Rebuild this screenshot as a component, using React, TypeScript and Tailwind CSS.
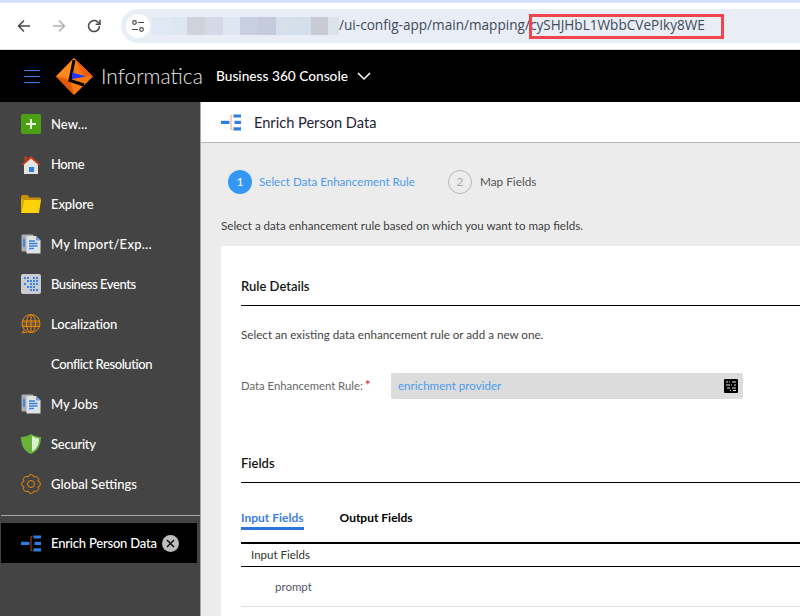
const pix: [number, string][] = [
  [18, "#dfe8f3"], [17, "#dde7f2"], [18, "#cfd2db"], [18, "#d3d9e6"], [17, "#dde6f1"], [18, "#c7cfe0"], [18, "#c5cbdd"], [17, "#d6e0ea"], [18, "#d3dfeb"], [17, "#c8cbd6"], [11, "#dde3ea"],
];

function EnrichIcon({ bracket = "#b5431a" }: { bracket?: string }) {
  return (
    <svg width="20" height="17" viewBox="0 0 20 17" className="shrink-0">
      <path d="M11.500 1.500H10v14h1.500" fill="none" stroke={bracket} strokeWidth="1" />
      <rect x="0" y="6.800" width="8.500" height="3.200" fill="#2f7de1" />
      <rect x="12.500" y="0.500" width="7.500" height="3" fill="#2f7de1" />
      <rect x="13.500" y="6.800" width="6.500" height="3.200" fill="#2f7de1" />
      <rect x="12.500" y="13.300" width="7.500" height="3.200" fill="#2f7de1" />
    </svg>
  );
}

function DocsIcon() {
  return (
    <svg width="20" height="20" viewBox="0 0 20 20">
      <rect x="0.500" y="0.500" width="12" height="17" rx="1" fill="#a9adb3" />
      <rect x="2" y="5" width="2" height="8" fill="#4d86d8" />
      <path d="M5.500 2h9.500l4.500 4.500v13H5.500z" fill="#dfe1e4" />
      <path d="M15 2l4.500 4.500H15z" fill="#6fa0e6" />
      <path d="M8 7h6M8 9.500h8.500M8 12h8.500M8 14.500h5" stroke="#3d7fdd" strokeWidth="1.500" />
    </svg>
  );
}

const icons: Record<string, React.ReactNode> = {
  new: (
    <svg width="20" height="20" viewBox="0 0 20 20">
      <rect width="20" height="20" rx="2" fill="#4ca013" />
      <path d="M10 5v10M5 10h10" stroke="#e6f4da" strokeWidth="2" />
    </svg>
  ),
  home: (
    <svg width="20" height="19" viewBox="0 0 20 19">
      <path d="M3 9l7-6 7 6v10H3z" fill="#e4e4e4" />
      <path d="M0 10L10 1l10 9h-2.500L10 3.500 2.500 10z" fill="#cf3e17" />
      <path d="M3.500 1.500h2.500v2.500L3.500 6z" fill="#cf3e17" />
      <rect x="8" y="12" width="5" height="5" fill="#2f7de1" />
    </svg>
  ),
  explore: (
    <svg width="20" height="18" viewBox="0 0 20 18">
      <path d="M0 2c0-1 .5-2 1.500-2h5l2 2.500H19l1 1V5H4L2 9z" fill="#c98f06" />
      <path d="M3 5h17l-2 13H0z" fill="#fbd109" />
      <path d="M0 3v15l3-13z" fill="#e2ab07" />
    </svg>
  ),
  docs: <DocsIcon />,
  events: (
    <svg width="20" height="20" viewBox="0 0 20 20">
      <rect width="20" height="20" rx="2" fill="#c9ccd1" />
      {[[3,3],[6,3],[12,3],[15,3],[6,6],[9,6],[12,6],[15,6],[3,9],[9,9],[12,9],[15,9],[6,12],[9,12],[12,12],[9,15],[12,15],[15,15]].map(([x, y]) => (
        <rect key={`${x}-${y}`} x={x} y={y} width="2" height="2" fill="#3d86e6" />
      ))}
    </svg>
  ),
  globe: (
    <svg width="20" height="20" viewBox="0 0 20 20" fill="none" stroke="#e8890c" strokeWidth="1">
      <path d="M1.500 7h17v5.500h-17z" fill="#e8890c" fillOpacity="0.3" stroke="none" />
      <circle cx="10" cy="9.500" r="9" />
      <ellipse cx="10" cy="9.500" rx="4.500" ry="9" />
      <path d="M1.500 7h17M1.500 12.500h17M10 .5v18" />
      <path d="M3 16l-2 3 5-1" />
    </svg>
  ),
  shield: (
    <svg width="20" height="20" viewBox="0 0 20 20">
      <path d="M10 0c3 2 6 3 10 3 0 8-3 14-10 17C3 17 0 11 0 3c4 0 7-1 10-3z" fill="#69b33a" />
      <path d="M11 2c2 1 4 2 7 2.500 0 6-2 10.500-7 13z" fill="#dcefd0" />
    </svg>
  ),
  gear: (
    <svg width="20" height="20" viewBox="0 0 20 20" fill="none" stroke="#e8890c" strokeWidth="1">
      <circle cx="10" cy="10" r="3.500" />
      <path d="M12.870 3.070A2.900 2.900 0 0 1 16.930 7.130A2.900 2.900 0 0 1 16.930 12.870A2.900 2.900 0 0 1 12.870 16.930A2.900 2.900 0 0 1 7.130 16.930A2.900 2.900 0 0 1 3.070 12.870A2.900 2.900 0 0 1 3.070 7.130A2.900 2.900 0 0 1 7.130 3.070A2.900 2.900 0 0 1 12.870 3.070Z" />
    </svg>
  ),
  none: null,
};

const items: [string, string, string][] = [
  ["new", "New...", "tracking-[0.1px]"],
  ["home", "Home", "tracking-[-0.4px]"],
  ["explore", "Explore", "tracking-[-0.1px]"],
  ["docs", "My Import/Exp...", "tracking-[0.25px]"],
  ["events", "Business Events", "tracking-[-0.45px]"],
  ["globe", "Localization", "tracking-[-0.1px]"],
  ["none", "Conflict Resolution", "tracking-[-0.4px]"],
  ["docs", "My Jobs", "tracking-[0px]"],
  ["shield", "Security", "tracking-[-0.25px]"],
  ["gear", "Global Settings", "tracking-[0px]"],
];

export default function App() {
  return (
    <div className="relative h-[616px] w-[800px] overflow-hidden bg-white font-['Lato',sans-serif]">
      <div className="h-[3px] bg-[#d3e3fd]" />
      <div className="flex h-[47px] items-center rounded-tl-lg border-b border-[#dcdcdc] bg-white pb-[1px]">
        <div className="flex w-[121px] shrink-0 items-center pl-[16px] text-[#474747]">
          <svg width="16" height="16" viewBox="0 0 16 16" fill="none" stroke="#474747" strokeWidth="1.500">
            <path d="M14 8H2.500M8 2.500L2.500 8 8 13.500" />
          </svg>
          <svg className="ml-[19px]" width="16" height="16" viewBox="0 0 16 16" fill="none" stroke="#b0b0b0" strokeWidth="1.500">
            <path d="M2 8h11.500M8 2.500L13.500 8 8 13.500" />
          </svg>
          <svg className="ml-[19px]" width="16" height="16" viewBox="0 0 16 16" fill="none" stroke="#474747" strokeWidth="1.500">
            <path d="M13.500 8A5.500 5.500 0 1 1 11.500 3.800L14 6" />
            <path d="M14 1.800V6.200H9.700" />
          </svg>
        </div>
        <div className="flex h-[34px] flex-1 items-center overflow-hidden rounded-l-full bg-[#e9eef6] pl-[5px]">
          <div className="flex h-[24px] w-[24px] shrink-0 items-center justify-center rounded-full bg-white">
            <svg width="14" height="14" viewBox="0 0 14 14" fill="none" stroke="#474747" strokeWidth="1.200">
              <circle cx="3.500" cy="3.500" r="1.800" />
              <path d="M7 3.500h6M1 10.500h6" />
              <circle cx="10.500" cy="10.500" r="1.800" />
            </svg>
          </div>
          <div className="ml-[2px] flex h-[18px] shrink-0">
            {pix.map(([w, c], i) => (
              <div key={i} style={{ width: w, backgroundColor: c }} />
            ))}
          </div>
          <span className="font-['Open_Sans',sans-serif] text-[13.6px] whitespace-nowrap text-[#3f4a5a]">/ui-config-app/main/mapping/cySHJHbL1WbbCVePIky8WE</span>
        </div>
      </div>
      <div className="absolute top-[14px] left-[529px] h-[25px] w-[195px] border-[3px] border-[#f2444a]" />

      <div className="flex h-[52px] items-center bg-black">
        <div className="ml-[24px] flex w-[16px] flex-col gap-[5px]">
          <div className="h-px bg-[#2f80ed]" />
          <div className="h-px bg-[#2f80ed]" />
          <div className="h-px bg-[#2f80ed]" />
        </div>
        <svg className="ml-[16px]" width="37" height="37" viewBox="0 0 37 37">
          <path d="M18 0L0 18.500L18 37L37 18.500z" fill="#f97a12" />
          <path d="M18 0L0 18.500h14z" fill="#ff8a1c" />
          <path d="M18 0L37 18.500H28z" fill="#f0600a" />
          <path d="M0 18.500L12 31 18 37 14 22z" fill="#e25a06" />
          <path d="M18 37L37 18.500 28 27z" fill="#ffa02c" />
          <path d="M18 2L14 22.500 28 27" fill="none" stroke="#000" strokeWidth="3" />
          <path d="M16 14.500L30 18.500 16 21z" fill="#1c35ff" />
        </svg>
        <span className="ml-[8px] w-[115px] shrink-0 text-[21px] font-light text-[#e8e8e8]">Informatica</span>
        <span className="text-[13.7px] font-medium text-white">Business 360 Console</span>
        <svg className="ml-[9px]" width="14" height="9" viewBox="0 0 14 9" fill="none" stroke="white" strokeWidth="1.500">
          <path d="M1 1l6 6 6-6" />
        </svg>
      </div>

      <div className="flex h-[514px]">
        <aside className="w-[200px] shrink-0 bg-[#444444] pl-px">
          <div className="flex h-[414px] flex-col border-b border-[#aaaaaa] pt-[2px]">
            {items.map(([icon, label, track], i) => (
              <div key={i} className="flex h-[40px] shrink-0 items-center">
                <div className="flex w-[50px] justify-start pl-[20px]">{icons[icon]}</div>
                <span className={`pt-[2px] text-[13px] font-medium text-white ${track}`}>{label}</span>
              </div>
            ))}
          </div>
          <div className="mt-[7px] flex h-[40px] w-[196px] items-center bg-black">
            <div className="flex w-[50px] justify-start pl-[20px]">
              <EnrichIcon />
            </div>
            <span className="pt-[2px] text-[13px] font-medium tracking-[-0.2px] text-white">Enrich Person Data</span>
            <div className="ml-[5px] flex h-[17px] w-[17px] items-center justify-center rounded-full bg-[#bdbdbd]">
              <svg width="9" height="9" viewBox="0 0 9 9" fill="none" stroke="#111" strokeWidth="1.500">
                <path d="M1 1l7 7M8 1L1 8" />
              </svg>
            </div>
          </div>
        </aside>

        <main className="flex-1 overflow-hidden border-l border-[#a8a8a8] bg-[#ececec]">
          <div className="flex h-[41px] items-center gap-[13px] border-b border-[#b5b5b5] bg-white pl-[20px]">
            <EnrichIcon bracket="#f0a070" />
            <span className="pt-[1px] text-[14.6px] text-[#1d2433]">Enrich Person Data</span>
          </div>
          <div className="flex items-center pt-[27px] pl-[27px]">
            <div className="flex h-[24px] w-[24px] items-center justify-center rounded-full bg-[#3597f5] text-[12px] text-white">1</div>
            <span className="ml-[7px] text-[11.6px] text-[#4c9bf0]">Select Data Enhancement Rule</span>
            <div className="ml-[33px] flex h-[24px] w-[24px] items-center justify-center rounded-full border border-[#b8b8b8] text-[12px] text-[#a8a8a8]">2</div>
            <span className="ml-[8px] text-[11.8px] text-[#555555]">Map Fields</span>
          </div>
          <p className="mt-[24px] pl-[20px] text-[11.6px] leading-[16px] text-[#3c3c3c]">Select a data enhancement rule based on which you want to map fields.</p>
          <section className="mt-[12px] ml-[20px] h-[400px] w-[620px] bg-white pt-[31px] pl-[20px]">
            <h2 className="text-[13px] leading-[18px] font-semibold text-[#151515]">Rule Details</h2>
            <div className="mt-[10px] h-px bg-black" />
            <p className="mt-[21px] text-[11.65px] leading-[16px] text-[#444444]">Select an existing data enhancement rule or add a new one.</p>
            <div className="mt-[30px] flex items-center">
              <span className="w-[150px] text-[11.3px] text-[#666666]">
                Data Enhancement Rule:<span className="ml-[2px] text-[14px] leading-none text-[#e8202a]">*</span>
              </span>
              <div className="flex h-[26px] w-[352px] items-center justify-between rounded-[2px] bg-[#dcdcdc] pr-[5px] pl-[7px]">
                <span className="text-[11.6px] text-[#4c9bf0]">enrichment provider</span>
                <svg width="14" height="14" viewBox="0 0 14 14">
                  <rect width="14" height="14" rx="1" fill="#000" />
                  <path d="M2 3h2M5 3h1M8 3h4M2 6h4M7 6h1M10 6h2M3 9h3M8 9h4M6 11.500h1M9 11.500h3" stroke="#e5e5e5" strokeWidth="1.200" />
                </svg>
              </div>
            </div>
            <h2 className="mt-[55px] text-[13px] leading-[18px] font-semibold text-[#151515]">Fields</h2>
            <div className="mt-[10px] h-px bg-black" />
            <div className="mt-[26px] flex text-[12px] font-bold">
              <div className="border-b-[3px] border-[#2e75dc] text-[#3c7ddc]">Input Fields</div>
              <div className="ml-[36px] text-black">Output Fields</div>
            </div>
            <div className="mt-[12px] flex h-[25px] items-center border-t-2 border-b border-black pl-[10px] text-[11.5px] text-[#333333]">Input Fields</div>
            <div className="flex h-[40px] items-center border-b border-[#dddddd] pl-[34px] text-[11.5px] text-[#555566]">prompt</div>
          </section>
        </main>
      </div>
    </div>
  );
}
